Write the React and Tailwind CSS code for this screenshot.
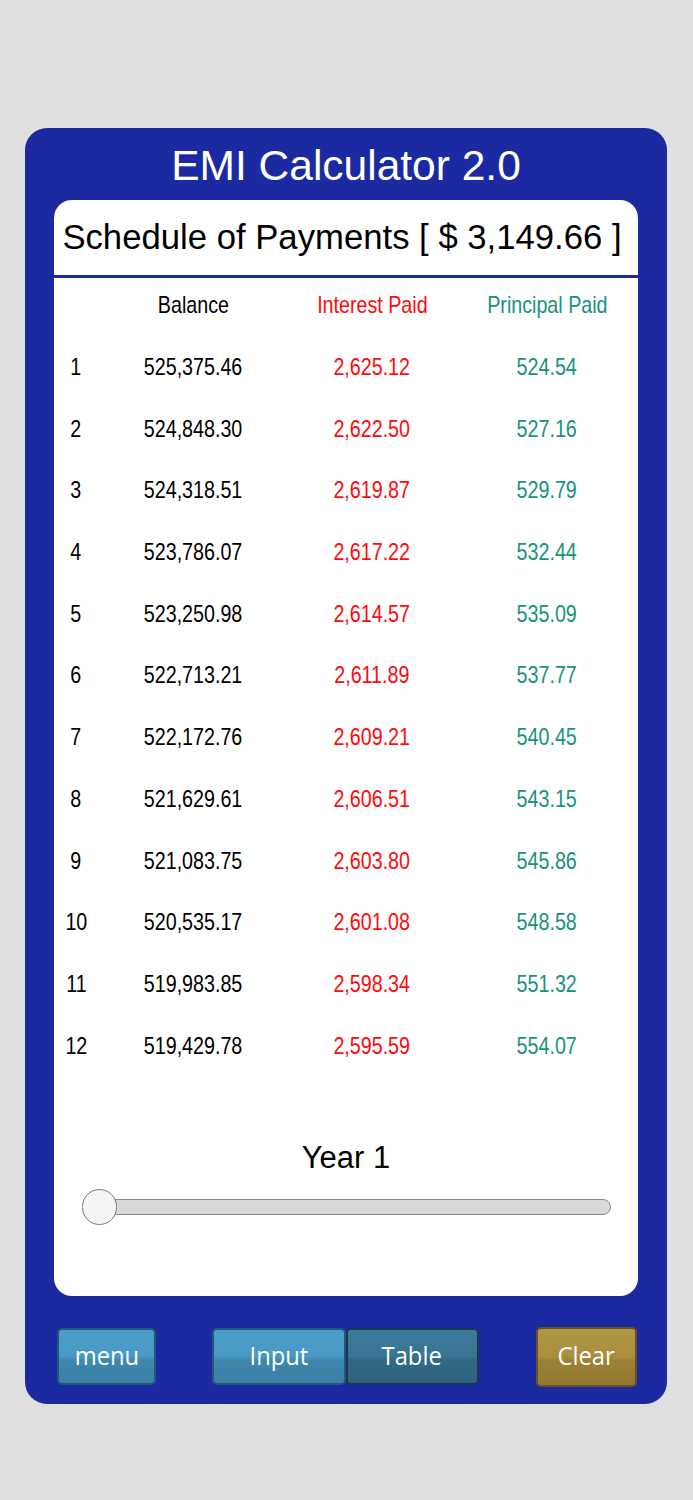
import React from "react";

const rows = [
  ["1", "525,375.46", "2,625.12", "524.54"],
  ["2", "524,848.30", "2,622.50", "527.16"],
  ["3", "524,318.51", "2,619.87", "529.79"],
  ["4", "523,786.07", "2,617.22", "532.44"],
  ["5", "523,250.98", "2,614.57", "535.09"],
  ["6", "522,713.21", "2,611.89", "537.77"],
  ["7", "522,172.76", "2,609.21", "540.45"],
  ["8", "521,629.61", "2,606.51", "543.15"],
  ["9", "521,083.75", "2,603.80", "545.86"],
  ["10", "520,535.17", "2,601.08", "548.58"],
  ["11", "519,983.85", "2,598.34", "551.32"],
  ["12", "519,429.78", "2,595.59", "554.07"],
];

const arial = { fontFamily: '"Liberation Sans", Arial, sans-serif' };

function N({ children, className }) {
  return (
    <div className={"text-center " + className}>
      <span className="inline-block scale-x-[0.82] whitespace-nowrap">{children}</span>
    </div>
  );
}

export default function App() {
  return (
    <div className="min-h-[1500px] w-full bg-[#e0e0e0] pt-[128px] pl-[25px]">
      <div className="w-[642px] rounded-[22px] bg-[#1b2aa0] px-[29px] pb-[17px]">
        <div
          className="flex h-[72px] items-center justify-center pt-[4px] text-[42.5px] leading-none text-white"
          style={arial}
        >
          EMI Calculator 2.0
        </div>
        <div className="overflow-hidden rounded-[18px] bg-white">
          <div
            className="flex h-[75px] items-center justify-center pr-[8px] text-[34.7px] leading-none text-black"
            style={arial}
          >
            Schedule of Payments [ $ 3,149.66 ]
          </div>
          <div className="h-[3px] bg-[#1b2aa0]" />
          <div style={arial} className="text-[24px] leading-none">
            <div className="grid h-[58px] grid-cols-[44px_190px_168px_1fr] items-center pb-[4px]">
              <div />
              <N className="text-black">Balance</N>
              <N className="text-[#ff0a0a]">Interest Paid</N>
              <N className="text-[#17937b]">Principal Paid</N>
            </div>
            {rows.map((r) => (
              <div
                key={r[0]}
                className="grid h-[61.73px] grid-cols-[44px_190px_168px_1fr] items-center"
              >
                <N className="text-black">{r[0]}</N>
                <N className="text-black">{r[1]}</N>
                <N className="text-[#ff0a0a]">{r[2]}</N>
                <N className="text-[#17937b]">{r[3]}</N>
              </div>
            ))}
          </div>
          <div
            className="mt-[63px] flex h-[36px] items-center justify-center text-[31px] leading-none text-black"
            style={arial}
          >
            Year 1
          </div>
          <div className="mt-[13px] mb-[71px] flex h-[36px] items-center pl-[28px] pr-[27px]">
            <div className="relative h-[36px] w-full">
              <div className="absolute left-[3px] right-0 top-[10px] h-[16px] rounded-full border border-[#8a8a8a] bg-[#d9d9d9]" />
              <div className="absolute left-0 top-0 h-[36px] w-[35px] rounded-full border-[1.5px] border-[#7a7a7a] bg-[#f4f4f4]" />
            </div>
          </div>
        </div>
        <div
          className="mt-[31px] flex items-center justify-between pl-[3px] pr-[1px] text-[25px] leading-none text-white"
          style={{ fontFamily: '"Open Sans", "Noto Sans", sans-serif' }}
        >
          <div className="flex h-[57px] w-[99px] items-center justify-center rounded-[5px] border-2 border-[#24557a] bg-[linear-gradient(to_bottom,#4c9fcb_0%,#4899c4_50%,#3f88ae_56%,#3c7fa4_100%)] pb-[2px]">
            <span className="inline-block scale-x-[0.95]">menu</span>
          </div>
          <div className="flex pr-[2px]">
            <div className="flex h-[57px] w-[134px] items-center justify-center rounded-[5px] border-2 border-[#24557a] bg-[linear-gradient(to_bottom,#4c9fcb_0%,#4899c4_50%,#3f88ae_56%,#3c7fa4_100%)] pb-[2px]">
              <span className="inline-block scale-x-[0.95]">Input</span>
            </div>
            <div className="flex h-[57px] w-[133px] items-center justify-center rounded-[5px] border-2 border-[#1c3650] bg-[linear-gradient(to_bottom,#3c7a99_0%,#387592_50%,#316883_56%,#2e6380_100%)] pb-[2px]">
              <span className="inline-block scale-x-[0.95]">Table</span>
            </div>
          </div>
          <div className="flex h-[60px] w-[101px] items-center justify-center rounded-[5px] border-2 border-[#6a5220] bg-[linear-gradient(to_bottom,#b19644_0%,#aa8e3f_50%,#9c8135_56%,#937732_100%)] pb-[2px]">
            <span className="inline-block scale-x-[0.95]">Clear</span>
          </div>
        </div>
      </div>
    </div>
  );
}
